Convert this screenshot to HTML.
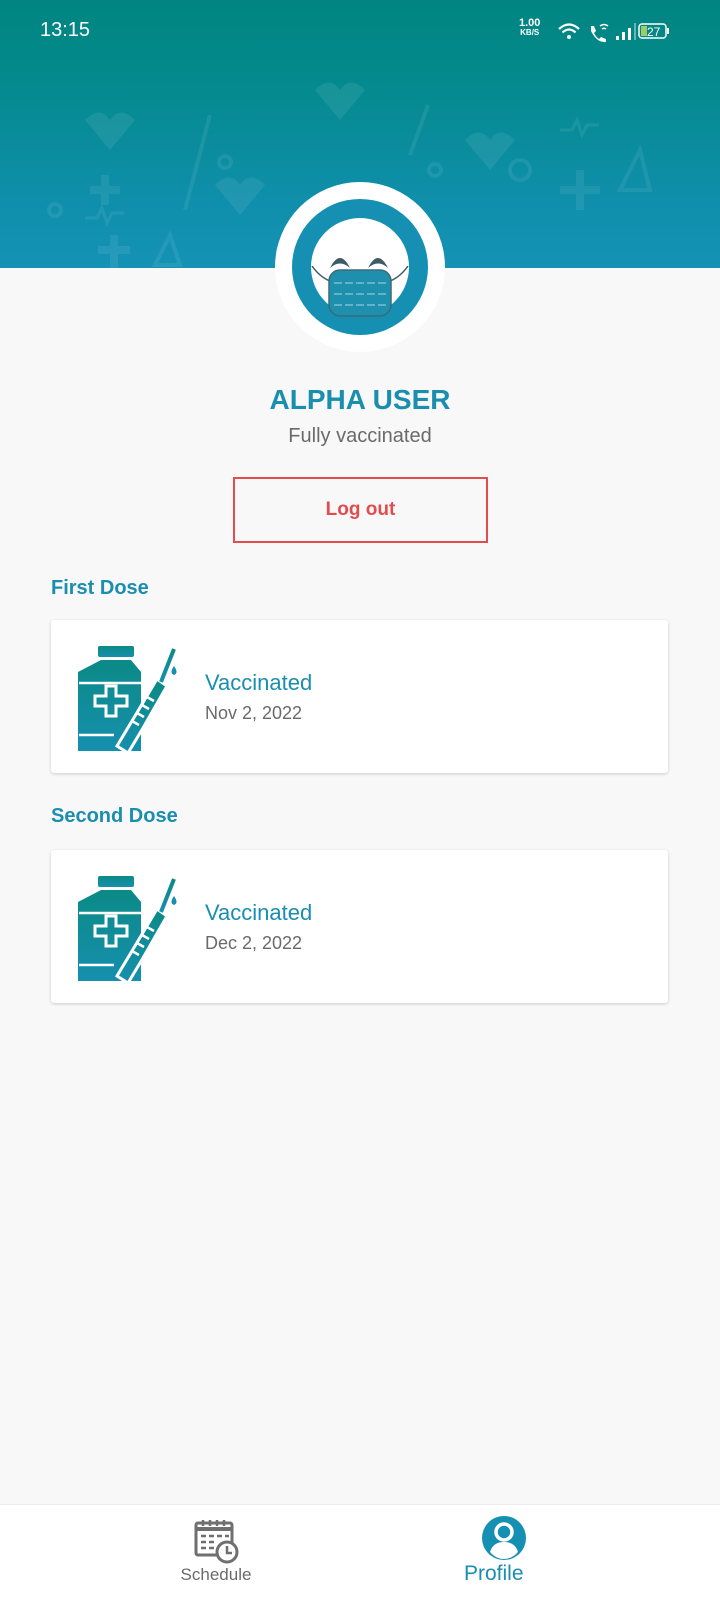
<!DOCTYPE html>
<html><head><meta charset="utf-8"><style>
*{margin:0;padding:0;box-sizing:border-box}
body{width:720px;height:1600px;background:#f8f8f8;font-family:"Liberation Sans",sans-serif;position:relative;overflow:hidden}
.hdr{position:absolute;left:0;top:0;width:720px;height:268px;background:linear-gradient(#008581 0%,#03898a 25%,#0f8fab 75%,#1592b5 100%)}
.abs{position:absolute}
.t{position:absolute;white-space:nowrap}
.card{position:absolute;left:51px;width:617px;background:#fff;border-radius:3px;box-shadow:0 1px 3px rgba(0,0,0,.18)}
</style></head><body>
<div class="hdr">
<svg class="abs" style="left:0;top:60px" width="720" height="208" fill="none" stroke="rgba(255,255,255,.08)" stroke-width="4">
<circle cx="55" cy="150" r="6"/><circle cx="225" cy="102" r="6"/><circle cx="520" cy="110" r="10"/><circle cx="435" cy="110" r="6"/><circle cx="285" cy="190" r="7"/>
<path d="M90 130 H120 M105 115 V145" stroke-width="8"/><path d="M580 110 V150 M560 130 H600" stroke-width="8"/><path d="M98 190 H130 M114 175 V208" stroke-width="8"/>
<path d="M210 55 L185 150"/><path d="M428 45 L410 95"/>
<path d="M85 60 q15 -15 25 0 q10 -15 25 0 l-25 30z" fill="rgba(255,255,255,.08)" stroke="none"/>
<path d="M315 30 q15 -15 25 0 q10 -15 25 0 l-25 30z" fill="rgba(255,255,255,.08)" stroke="none"/>
<path d="M215 125 q15 -15 25 0 q10 -15 25 0 l-25 30z" fill="rgba(255,255,255,.08)" stroke="none"/>
<path d="M465 80 q15 -15 25 0 q10 -15 25 0 l-25 30z" fill="rgba(255,255,255,.08)" stroke="none"/>
<path d="M85 158 h12 l5 -10 l5 15 l5 -10 h12" stroke-width="3"/><path d="M560 70 h12 l5 -10 l5 15 l5 -10 h12" stroke-width="3"/>
<path d="M640 90 l-20 40 h30z" stroke-width="4"/><path d="M170 175 l-15 30 h25z" stroke-width="4"/>
</svg>
</div>
<div class="t" style="left:40px;top:19px;color:#fff;font-size:20px">13:15</div>
<div class="t" style="left:519px;top:19px;color:#fff;font-size:11px;font-weight:bold;line-height:9px;text-align:center">1.00<br><span style="font-size:8px">KB/S</span></div>
<svg class="abs" style="left:556px;top:20px" width="130" height="24" fill="#fff" stroke="#fff">
<path d="M3 9 q10 -9 20 0" fill="none" stroke-width="2.2"/><path d="M6.5 12.5 q6.5 -6 13 0" fill="none" stroke-width="2.2"/><circle cx="13" cy="17" r="2" stroke="none"/>
<path d="M35 6 l3 0 l2 5 l-2 2 q2 4 5 6 l2 -2 l5 2 v3 q-9 1 -15 -11z" stroke="none"/><path d="M44 6 q4 -3 8 0 M46 9 q2 -1.5 4 0" fill="none" stroke-width="1.5"/>
<rect x="60" y="16" width="3" height="4" stroke="none"/><rect x="66" y="12" width="3" height="8" stroke="none"/><rect x="72" y="8" width="3" height="12" stroke="none"/><rect x="78" y="3" width="2" height="17" opacity=".4" stroke="none"/>
<rect x="83" y="4" width="27" height="14" rx="3" fill="none" stroke-width="1.5"/><rect x="85" y="6" width="6" height="10" fill="#9ccc65" stroke="none"/><rect x="111" y="8" width="2" height="6" stroke="none"/>
<text x="91" y="16" font-size="12" stroke="none" font-family="Liberation Sans">27</text>
</svg>
<svg class="abs" style="left:275px;top:182px" width="170" height="170">
<circle cx="85" cy="85" r="85" fill="#fff"/><circle cx="85" cy="85" r="68" fill="#1590b2"/><circle cx="85" cy="85" r="49" fill="#fff"/>
<path d="M55 86 q10 -20 20 0 q-10 -9 -20 0z" fill="#3d5a66"/><path d="M93 86 q10 -20 20 0 q-10 -9 -20 0z" fill="#3d5a66"/>
<path d="M37 84 q10 14 24 17 M133 84 q-10 14 -24 17" stroke="#3d5a66" stroke-width="1.5" fill="none"/>
<rect x="54" y="88" width="62" height="46" rx="11" fill="#1f8fae" stroke="#3d6a7a" stroke-width="1.5"/>
<path d="M59 101 h52 M59 112 h52 M59 123 h52" stroke="#a9d6e3" stroke-width="1" stroke-dasharray="8 3"/>
</svg>
<div class="t" style="left:0;width:720px;text-align:center;top:384px;color:#1a8eaf;font-size:28px;font-weight:bold">ALPHA USER</div>
<div class="t" style="left:0;width:720px;text-align:center;top:425px;color:#6a6a6a;font-size:20px">Fully vaccinated</div>
<div class="abs" style="left:233px;top:477px;width:255px;height:66px;border:2.5px solid #e24c4f;color:#e24c4f;font-size:19px;font-weight:bold;text-align:center;line-height:61px">Log out</div>
<div class="t" style="left:51px;top:577px;color:#1a8eaf;font-size:20px;font-weight:bold">First Dose</div>
<div class="t" style="left:51px;top:805px;color:#1a8eaf;font-size:20px;font-weight:bold">Second Dose</div>
<svg width="0" height="0" style="position:absolute"><defs>
<linearGradient id="g" x1="0" y1="0" x2="0" y2="1"><stop offset="0" stop-color="#0b8a86"/><stop offset="1" stop-color="#168fae"/></linearGradient>
<g id="vac">
<rect x="21" y="0" width="36" height="11" rx="2" fill="url(#g)"/>
<path d="M24 14 h30 l10 12 v79 h-63 v-79z" fill="url(#g)"/>
<path d="M2 37 h62 M2 89 h35" stroke="#fff" stroke-width="2.5"/>
<path d="M18 50 h11 v-10 h10 v10 h11 v10 h-11 v10 h-10 v-10 h-11z" fill="none" stroke="#fff" stroke-width="3"/>
<path d="M40 100 L55 75 L80 33 L90 40 L66 82 L51 107z" fill="url(#g)" stroke="#fff" stroke-width="3"/>
<path d="M55 75 l7 4 M60 67 l7 4 M65 59 l7 4 M70 51 l7 4" stroke="#fff" stroke-width="2.5"/>
<path d="M84 36 L97 3" stroke="url(#g)" stroke-width="4"/>
<path d="M97 20 q-5 7 0 9 q5 -2 0 -9z" fill="#168fae"/>
</g></defs></svg>
<div class="card" style="top:620px;height:153px">
<svg class="abs" style="left:26px;top:26px" width="102" height="110"><use href="#vac"/></svg>
<div class="t" style="left:154px;top:50px;color:#1a8eaf;font-size:22px">Vaccinated</div>
<div class="t" style="left:154px;top:83px;color:#6a6a6a;font-size:18px">Nov 2, 2022</div>
</div>
<div class="card" style="top:850px;height:153px">
<svg class="abs" style="left:26px;top:26px" width="102" height="110"><use href="#vac"/></svg>
<div class="t" style="left:154px;top:50px;color:#1a8eaf;font-size:22px">Vaccinated</div>
<div class="t" style="left:154px;top:83px;color:#6a6a6a;font-size:18px">Dec 2, 2022</div>
</div>
<div class="abs" style="left:0;top:1504px;width:720px;height:96px;background:#fff;border-top:1px solid #eee"></div>
<svg class="abs" style="left:194px;top:1518px" width="46" height="46">
<rect x="2" y="5" width="36" height="32" rx="2" fill="none" stroke="#6f6f6f" stroke-width="3"/>
<path d="M2 11 h36" stroke="#6f6f6f" stroke-width="4"/>
<path d="M9 2v6 M16 2v6 M23 2v6 M30 2v6" stroke="#6f6f6f" stroke-width="2.5"/>
<path d="M7 18h5 M15 18h5 M23 18h5 M31 18h4 M7 24h5 M15 24h5 M7 30h5 M15 30h5" stroke="#6f6f6f" stroke-width="2.5"/>
<circle cx="33" cy="34" r="10" fill="#fff" stroke="#6f6f6f" stroke-width="3"/><path d="M33 28v7h5" fill="none" stroke="#6f6f6f" stroke-width="2.5"/>
</svg>
<div class="t" style="left:0;width:432px;text-align:center;top:1565px;color:#6a6a6a;font-size:17px">Schedule</div>
<svg class="abs" style="left:481px;top:1515px" width="46" height="46">
<circle cx="23" cy="23" r="22" fill="#1590b2"/><circle cx="23" cy="17" r="8" fill="none" stroke="#fff" stroke-width="3.5"/>
<path d="M9 37 q3 -10 14 -10 q11 0 14 10 q-6 7 -14 7 q-8 0 -14 -7z" fill="#fff"/>
</svg>
<div class="t" style="left:464px;top:1562px;color:#1a8eaf;font-size:21px">Profile</div>
</body></html>
